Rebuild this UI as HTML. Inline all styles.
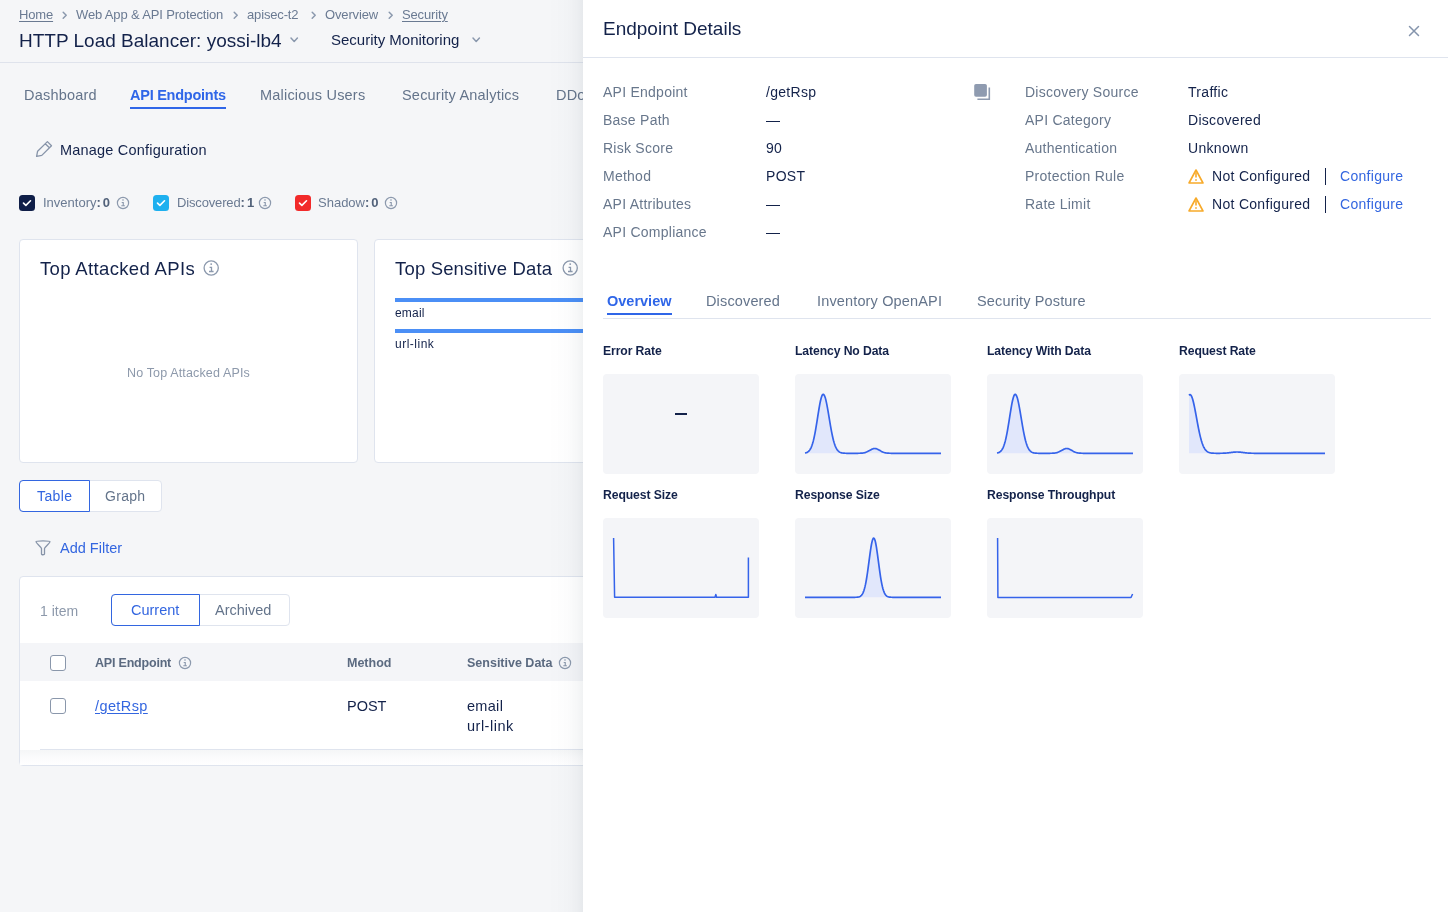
<!DOCTYPE html>
<html><head><meta charset="utf-8">
<style>
*{box-sizing:border-box;margin:0;padding:0}
html,body{width:1448px;height:912px;overflow:hidden}
body{font-family:"Liberation Sans",sans-serif;background:#f5f6f8;color:#13224a;position:relative}
.abs{position:absolute;white-space:nowrap;line-height:1;will-change:transform}
svg{position:absolute;overflow:visible}
.hdr{position:absolute;left:0;top:0;width:1448px;height:63px;border-bottom:1px solid #dfe3ec}
.bc{font-size:13px;color:#6a7a92;top:8px;letter-spacing:-.15px}
.bc u{text-decoration:underline;text-underline-offset:2px;text-decoration-thickness:1px}
.title{font-size:19px;color:#13224a;top:31px}
.tab{font-size:14.5px;color:#64748b;top:88px;letter-spacing:.2px}
.tab.act{color:#2f66e8;font-weight:bold;letter-spacing:-.25px}
.card{position:absolute;background:#fff;border:1px solid #dfe4ee;border-radius:4px}
.ph{font-size:18.5px;color:#13224a;top:260px}
.cb{position:absolute;width:16px;height:16px;border-radius:3.5px}
.lbl{font-size:13px;color:#6a7a92;top:196px}
.lbl b{color:#52627a}
.seg{position:absolute;background:#fff;border:1px solid #dfe4ee;border-radius:4px}
.segact{position:absolute;border:1px solid #3366e0;border-radius:4px 0 0 4px}
.panel{position:absolute;left:583px;top:0;width:865px;height:912px;background:#fff}
.shadow{position:absolute;left:548px;top:0;width:35px;height:912px;background:linear-gradient(to right,rgba(0,30,50,0) 0%,rgba(0,30,50,.012) 55%,rgba(0,30,50,.03) 80%,rgba(0,30,50,.055) 100%)}
.k{font-size:14px;color:#68778c;letter-spacing:.25px}
.v{font-size:14px;color:#13224a;letter-spacing:.3px}
.ct{font-size:12.2px;font-weight:bold;color:#13224a;letter-spacing:-.1px}
.cbx{position:absolute;width:156px;height:100px;background:#f4f5f8;border-radius:4px}
</style></head>
<body>
<div class="hdr"></div>
<!-- breadcrumb -->
<div class="abs bc" style="left:19px"><u>Home</u></div>
<svg style="left:62px;top:10.5px" width="6" height="9"><path d="M1.2 1.2 L4.2 4.2 L1.2 7.2" fill="none" stroke="#8a98ad" stroke-width="1.5" stroke-linecap="round" stroke-linejoin="round"/></svg>
<div class="abs bc" style="left:76px">Web App &amp; API Protection</div>
<svg style="left:233px;top:10.5px" width="6" height="9"><path d="M1.2 1.2 L4.2 4.2 L1.2 7.2" fill="none" stroke="#8a98ad" stroke-width="1.5" stroke-linecap="round" stroke-linejoin="round"/></svg>
<div class="abs bc" style="left:247px">apisec-t2</div>
<svg style="left:311px;top:10.5px" width="6" height="9"><path d="M1.2 1.2 L4.2 4.2 L1.2 7.2" fill="none" stroke="#8a98ad" stroke-width="1.5" stroke-linecap="round" stroke-linejoin="round"/></svg>
<div class="abs bc" style="left:325px">Overview</div>
<svg style="left:388px;top:10.5px" width="6" height="9"><path d="M1.2 1.2 L4.2 4.2 L1.2 7.2" fill="none" stroke="#8a98ad" stroke-width="1.5" stroke-linecap="round" stroke-linejoin="round"/></svg>
<div class="abs bc" style="left:402px"><u>Security</u></div>

<div class="abs title" style="left:19px">HTTP Load Balancer: yossi-lb4</div>
<svg style="left:290px;top:37px" width="9" height="7"><path d="M1 1 L4.2 4.4 L7.4 1" fill="none" stroke="#8a98ad" stroke-width="1.5" stroke-linecap="round" stroke-linejoin="round"/></svg>
<div class="abs" style="left:331px;top:32px;font-size:15px;color:#13224a">Security Monitoring</div>
<svg style="left:472px;top:37px" width="9" height="7"><path d="M1 1 L4.2 4.4 L7.4 1" fill="none" stroke="#8a98ad" stroke-width="1.5" stroke-linecap="round" stroke-linejoin="round"/></svg>

<!-- tabs -->
<div class="abs tab" style="left:24px">Dashboard</div>
<div class="abs tab act" style="left:130px">API Endpoints</div>
<div style="position:absolute;left:130px;top:107px;width:96px;height:2px;background:#2f66e8"></div>
<div class="abs tab" style="left:260px">Malicious Users</div>
<div class="abs tab" style="left:402px">Security Analytics</div>
<div class="abs tab" style="left:556px">DDoS</div>

<svg style="left:36px;top:141px" width="16" height="16"><path d="M0.6 15.4 L1.6 10.2 L11.4 0.6 L15.5 4.7 L5.8 14.4 Z M9.3 2.7 L13.4 6.8" fill="none" stroke="#8794a9" stroke-width="1.3" stroke-linejoin="round"/></svg>
<div class="abs" style="left:60px;top:143px;font-size:14.5px;color:#13224a;letter-spacing:.2px">Manage Configuration</div>

<div class="cb" style="left:19px;top:195px;background:#0f1e48"></div>
<svg style="left:19px;top:195px" width="16" height="16"><path d="M4.5 8.1 L6.9 10.4 L11.5 5.8" fill="none" stroke="#fff" stroke-width="1.6" stroke-linecap="round" stroke-linejoin="round"/></svg>
<div class="abs lbl" style="left:43px">Inventory<b>:<span style="margin-left:2px">0</span></b></div>
<svg style="left:116px;top:196px" width="14" height="14"><circle cx="7" cy="7" r="5.6" fill="none" stroke="#8c99ad" stroke-width="1.2"/><circle cx="7" cy="4.0" r="0.8" fill="#8c99ad"/><path d="M5.7 6.45 H7.25 V9.7 M5.3 9.75 H8.9" fill="none" stroke="#8c99ad" stroke-width="1.15"/></svg>

<div class="cb" style="left:153px;top:195px;background:#1eb0ef"></div>
<svg style="left:153px;top:195px" width="16" height="16"><path d="M4.5 8.1 L6.9 10.4 L11.5 5.8" fill="none" stroke="#fff" stroke-width="1.6" stroke-linecap="round" stroke-linejoin="round"/></svg>
<div class="abs lbl" style="left:177px"><span style="letter-spacing:-.15px">Discovered</span><b>:<span style="margin-left:2px">1</span></b></div>
<svg style="left:258px;top:196px" width="14" height="14"><circle cx="7" cy="7" r="5.6" fill="none" stroke="#8c99ad" stroke-width="1.2"/><circle cx="7" cy="4.0" r="0.8" fill="#8c99ad"/><path d="M5.7 6.45 H7.25 V9.7 M5.3 9.75 H8.9" fill="none" stroke="#8c99ad" stroke-width="1.15"/></svg>

<div class="cb" style="left:295px;top:195px;background:#f22a2a"></div>
<svg style="left:295px;top:195px" width="16" height="16"><path d="M4.5 8.1 L6.9 10.4 L11.5 5.8" fill="none" stroke="#fff" stroke-width="1.6" stroke-linecap="round" stroke-linejoin="round"/></svg>
<div class="abs lbl" style="left:318px">Shadow<b>:<span style="margin-left:2px">0</span></b></div>
<svg style="left:384px;top:196px" width="14" height="14"><circle cx="7" cy="7" r="5.6" fill="none" stroke="#8c99ad" stroke-width="1.2"/><circle cx="7" cy="4.0" r="0.8" fill="#8c99ad"/><path d="M5.7 6.45 H7.25 V9.7 M5.3 9.75 H8.9" fill="none" stroke="#8c99ad" stroke-width="1.15"/></svg>

<!-- cards -->
<div class="card" style="left:19px;top:239px;width:339px;height:224px"></div>
<div class="abs ph" style="left:40px;letter-spacing:.35px">Top Attacked APIs</div>
<svg style="left:203.3px;top:260px" width="16" height="16"><circle cx="8.2" cy="8" r="7.1" fill="none" stroke="#8c99ad" stroke-width="1.3"/><circle cx="8.2" cy="4.1" r="0.95" fill="#8c99ad"/><path d="M6.6 7.3 H8.5 V11.4 M6.0 11.5 H10.6" fill="none" stroke="#8c99ad" stroke-width="1.3"/></svg>
<div class="abs" style="left:127px;top:367px;font-size:12.5px;color:#8d99ab;letter-spacing:.15px">No Top Attacked APIs</div>

<div class="card" style="left:374px;top:239px;width:400px;height:224px"></div>
<div class="abs ph" style="left:395px;letter-spacing:.17px">Top Sensitive Data</div>
<svg style="left:562px;top:260px" width="16" height="16"><circle cx="8.2" cy="8" r="7.1" fill="none" stroke="#8c99ad" stroke-width="1.3"/><circle cx="8.2" cy="4.1" r="0.95" fill="#8c99ad"/><path d="M6.6 7.3 H8.5 V11.4 M6.0 11.5 H10.6" fill="none" stroke="#8c99ad" stroke-width="1.3"/></svg>
<div style="position:absolute;left:395px;top:298px;width:200px;height:4px;background:#4b8ff6"></div>
<div class="abs" style="left:395px;top:307px;font-size:12px;color:#13224a;letter-spacing:.2px">email</div>
<div style="position:absolute;left:395px;top:329px;width:200px;height:4px;background:#4b8ff6"></div>
<div class="abs" style="left:395px;top:338px;font-size:12px;color:#13224a;letter-spacing:.5px">url-link</div>

<!-- segmented -->
<div class="seg" style="left:19px;top:480px;width:143px;height:32px"></div>
<div class="segact" style="left:19px;top:480px;width:71px;height:32px"></div>
<div class="abs" style="left:37px;top:489px;font-size:14px;color:#3366e0;letter-spacing:.4px">Table</div>
<div class="abs" style="left:105px;top:489px;font-size:14px;color:#64748b;letter-spacing:.3px">Graph</div>

<svg style="left:35px;top:540px" width="16" height="16"><path d="M1 1.8 C1 0.6 15 0.6 15 1.8 C15 3 10.5 6.5 9.5 8.5 V14 C9.5 15 6.5 15 6.5 14 V8.5 C5.5 6.5 1 3 1 1.8 Z" fill="none" stroke="#8794a9" stroke-width="1.3" stroke-linejoin="round"/></svg>
<div class="abs" style="left:60px;top:541px;font-size:14.5px;color:#3366e0">Add Filter</div>

<!-- table card -->
<div class="card" style="left:19px;top:576px;width:700px;height:190px;border-radius:4px"></div>
<div class="abs" style="left:40px;top:604px;font-size:14px;color:#8d99ab">1 item</div>
<div class="seg" style="left:111px;top:594px;width:179px;height:32px"></div>
<div class="segact" style="left:111px;top:594px;width:89px;height:32px"></div>
<div class="abs" style="left:131px;top:603px;font-size:14.5px;color:#3366e0">Current</div>
<div class="abs" style="left:215px;top:603px;font-size:14.5px;color:#64748b">Archived</div>

<div style="position:absolute;left:20px;top:643px;width:700px;height:38px;background:#f4f5f8"></div>
<div style="position:absolute;left:50px;top:655px;width:16px;height:16px;border:1.3px solid #8a97ab;border-radius:3px;background:#fff"></div>
<div class="abs" style="left:95px;top:657px;font-size:12.5px;font-weight:bold;color:#5b6a80;letter-spacing:-.2px">API Endpoint</div>
<svg style="left:178px;top:656px" width="14" height="14"><circle cx="7" cy="7" r="5.6" fill="none" stroke="#8c99ad" stroke-width="1.2"/><circle cx="7" cy="4.0" r="0.8" fill="#8c99ad"/><path d="M5.7 6.45 H7.25 V9.7 M5.3 9.75 H8.9" fill="none" stroke="#8c99ad" stroke-width="1.15"/></svg>
<div class="abs" style="left:347px;top:657px;font-size:12.5px;font-weight:bold;color:#5b6a80">Method</div>
<div class="abs" style="left:467px;top:657px;font-size:12.5px;font-weight:bold;color:#5b6a80">Sensitive Data</div>
<svg style="left:558px;top:656px" width="14" height="14"><circle cx="7" cy="7" r="5.6" fill="none" stroke="#8c99ad" stroke-width="1.2"/><circle cx="7" cy="4.0" r="0.8" fill="#8c99ad"/><path d="M5.7 6.45 H7.25 V9.7 M5.3 9.75 H8.9" fill="none" stroke="#8c99ad" stroke-width="1.15"/></svg>

<div style="position:absolute;left:50px;top:698px;width:16px;height:16px;border:1.3px solid #8a97ab;border-radius:3px;background:#fff"></div>
<div class="abs" style="left:95px;top:699px;font-size:14.5px;color:#3366e0;text-decoration:underline;text-underline-offset:2px;letter-spacing:.4px">/getRsp</div>
<div class="abs" style="left:347px;top:699px;font-size:14.5px;color:#13224a">POST</div>
<div class="abs" style="left:467px;top:699px;font-size:14.5px;color:#13224a;letter-spacing:.3px">email</div>
<div class="abs" style="left:467px;top:719px;font-size:14.5px;color:#13224a;letter-spacing:.5px">url-link</div>
<div style="position:absolute;left:40px;top:749px;width:680px;height:1px;background:#dfe4ee"></div>
<div style="position:absolute;left:20px;top:750px;width:700px;height:15px;background:linear-gradient(#f5f6f7,#fcfcfd 60%,#fff)"></div>

<!-- panel -->
<div class="shadow"></div>
<div class="panel"></div>
<div class="abs" style="left:603px;top:19px;font-size:19px;color:#13224a">Endpoint Details</div>
<svg style="left:1409px;top:26px" width="10" height="10"><path d="M0.5 0.5 L9.5 9.5 M9.5 0.5 L0.5 9.5" stroke="#8494ac" stroke-width="1.5" stroke-linecap="round"/></svg>
<div style="position:absolute;left:583px;top:57px;width:865px;height:1px;background:#dfe4ee"></div>
<div class="abs k" style="left:603px;top:85px">API Endpoint</div>
<div class="abs v" style="left:766px;top:85px">/getRsp</div>
<div class="abs k" style="left:603px;top:113px">Base Path</div>
<div class="abs v" style="left:766px;top:113px">—</div>
<div class="abs k" style="left:603px;top:141px">Risk Score</div>
<div class="abs v" style="left:766px;top:141px">90</div>
<div class="abs k" style="left:603px;top:169px">Method</div>
<div class="abs v" style="left:766px;top:169px">POST</div>
<div class="abs k" style="left:603px;top:197px">API Attributes</div>
<div class="abs v" style="left:766px;top:197px">—</div>
<div class="abs k" style="left:603px;top:225px">API Compliance</div>
<div class="abs v" style="left:766px;top:225px">—</div>
<svg style="left:974px;top:84px" width="17" height="17"><rect x="0.2" y="0" width="12.7" height="12.7" rx="1.8" fill="#8f9bb0"/><path d="M15.3 3.5 V15.2 H3.4" fill="none" stroke="#8f9bb0" stroke-width="1.6"/></svg>
<div class="abs k" style="left:1025px;top:85px">Discovery Source</div>
<div class="abs v" style="left:1188px;top:85px">Traffic</div>
<div class="abs k" style="left:1025px;top:113px">API Category</div>
<div class="abs v" style="left:1188px;top:113px">Discovered</div>
<div class="abs k" style="left:1025px;top:141px">Authentication</div>
<div class="abs v" style="left:1188px;top:141px">Unknown</div>
<div class="abs k" style="left:1025px;top:169px">Protection Rule</div>
<svg style="left:1188px;top:169px" width="16" height="15"><path d="M8 1 L15 14 H1 Z" fill="none" stroke="#f7aa2a" stroke-width="1.6" stroke-linejoin="round"/><path d="M8 3.2 V8.6" stroke="#f7aa2a" stroke-width="1.6"/><rect x="7.2" y="10.2" width="1.6" height="1.6" fill="#f7aa2a"/></svg>
<div class="abs v" style="left:1212px;top:169px">Not Configured</div>
<div style="position:absolute;left:1325px;top:168px;width:1.3px;height:17px;background:#13224a"></div>
<div class="abs v" style="left:1340px;top:169px;color:#3366e0">Configure</div>
<div class="abs k" style="left:1025px;top:197px">Rate Limit</div>
<svg style="left:1188px;top:197px" width="16" height="15"><path d="M8 1 L15 14 H1 Z" fill="none" stroke="#f7aa2a" stroke-width="1.6" stroke-linejoin="round"/><path d="M8 3.2 V8.6" stroke="#f7aa2a" stroke-width="1.6"/><rect x="7.2" y="10.2" width="1.6" height="1.6" fill="#f7aa2a"/></svg>
<div class="abs v" style="left:1212px;top:197px">Not Configured</div>
<div style="position:absolute;left:1325px;top:196px;width:1.3px;height:17px;background:#13224a"></div>
<div class="abs v" style="left:1340px;top:197px;color:#3366e0">Configure</div>
<div class="abs" style="left:607px;top:294px;font-size:14.5px;letter-spacing:.15px;color:#2f66e8;font-weight:bold;letter-spacing:0">Overview</div>
<div class="abs" style="left:706px;top:294px;font-size:14.5px;letter-spacing:.15px;color:#64748b">Discovered</div>
<div class="abs" style="left:817px;top:294px;font-size:14.5px;letter-spacing:.15px;color:#64748b">Inventory OpenAPI</div>
<div class="abs" style="left:977px;top:294px;font-size:14.5px;letter-spacing:.15px;color:#64748b">Security Posture</div>
<div style="position:absolute;left:603px;top:318px;width:828px;height:1px;background:#dfe4ee"></div>
<div style="position:absolute;left:607px;top:313px;width:65px;height:2px;background:#2f66e8"></div>
<div class="abs ct" style="left:603px;top:345px">Error Rate</div>
<div class="cbx" style="left:603px;top:374px"></div><div style="position:absolute;left:675px;top:412.5px;width:12px;height:2px;background:#13224a"></div>
<div class="abs ct" style="left:795px;top:345px">Latency No Data</div>
<div class="cbx" style="left:795px;top:374px"></div><svg style="left:795px;top:374px" width="156" height="100"><path d="M10.0 79.00 L10.5 78.90 L11.0 78.77 L11.5 78.61 L12.0 78.40 L12.5 78.14 L13.0 77.82 L13.5 77.42 L14.0 76.93 L14.5 76.34 L15.0 75.63 L15.5 74.79 L16.0 73.80 L16.5 72.65 L17.0 71.32 L17.5 69.79 L18.0 68.07 L18.5 66.14 L19.0 64.00 L19.5 61.65 L20.0 59.10 L20.5 56.38 L21.0 53.48 L21.5 50.46 L22.0 47.33 L22.5 44.15 L23.0 40.96 L23.5 37.81 L24.0 34.76 L24.5 31.87 L25.0 29.19 L25.5 26.77 L26.0 24.68 L26.5 22.96 L27.0 21.64 L27.5 20.76 L28.0 20.34 L28.5 20.38 L29.0 20.84 L29.5 21.71 L30.0 22.98 L30.5 24.62 L31.0 26.58 L31.5 28.84 L32.0 31.35 L32.5 34.06 L33.0 36.92 L33.5 39.89 L34.0 42.91 L34.5 45.94 L35.0 48.93 L35.5 51.86 L36.0 54.68 L36.5 57.37 L37.0 59.90 L37.5 62.27 L38.0 64.45 L38.5 66.45 L39.0 68.25 L39.5 69.87 L40.0 71.32 L40.5 72.58 L41.0 73.69 L41.5 74.65 L42.0 75.47 L42.5 76.17 L43.0 76.76 L43.5 77.26 L44.0 77.66 L44.5 78.00 L45.0 78.28 L45.5 78.50 L46.0 78.68 L46.5 78.82 L47.0 78.93 L47.5 79.02 L48.0 79.09 L48.5 79.14 L49.0 79.18 L49.5 79.21 L50.0 79.24 L50.5 79.25 L51.0 79.27 L51.5 79.28 L52.0 79.28 L52.5 79.29 L53.0 79.29 L53.5 79.29 L54.0 79.30 L54.5 79.30 L55.0 79.30 L55.5 79.30 L56.0 79.30 L56.5 79.30 L57.0 79.30 L57.5 79.30 L58.0 79.30 L58.5 79.30 L59.0 79.30 L59.5 79.30 L60.0 79.30 L60.5 79.30 L61.0 79.30 L61.5 79.29 L62.0 79.29 L62.5 79.29 L63.0 79.28 L63.5 79.27 L64.0 79.27 L64.5 79.25 L65.0 79.24 L65.5 79.21 L66.0 79.19 L66.5 79.15 L67.0 79.11 L67.5 79.06 L68.0 78.99 L68.5 78.91 L69.0 78.81 L69.5 78.70 L70.0 78.57 L70.5 78.42 L71.0 78.24 L71.5 78.05 L72.0 77.83 L72.5 77.60 L73.0 77.34 L73.5 77.07 L74.0 76.79 L74.5 76.51 L75.0 76.21 L75.5 75.93 L76.0 75.65 L76.5 75.39 L77.0 75.15 L77.5 74.94 L78.0 74.77 L78.5 74.64 L79.0 74.55 L79.5 74.50 L80.0 74.51 L80.5 74.56 L81.0 74.66 L81.5 74.80 L82.0 74.98 L82.5 75.20 L83.0 75.44 L83.5 75.70 L84.0 75.98 L84.5 76.27 L85.0 76.56 L85.5 76.85 L86.0 77.13 L86.5 77.40 L87.0 77.65 L87.5 77.88 L88.0 78.09 L88.5 78.28 L89.0 78.45 L89.5 78.60 L90.0 78.72 L90.5 78.83 L91.0 78.93 L91.5 79.00 L92.0 79.07 L92.5 79.12 L93.0 79.16 L93.5 79.19 L94.0 79.22 L94.5 79.24 L95.0 79.26 L95.5 79.27 L96.0 79.28 L96.5 79.28 L97.0 79.29 L97.5 79.29 L98.0 79.29 L98.5 79.30 L99.0 79.30 L99.5 79.30 L100.0 79.30 L100.5 79.30 L101.0 79.30 L101.5 79.30 L102.0 79.30 L102.5 79.30 L103.0 79.30 L103.5 79.30 L104.0 79.30 L104.5 79.30 L105.0 79.30 L105.5 79.30 L106.0 79.30 L106.5 79.30 L107.0 79.30 L107.5 79.30 L108.0 79.30 L108.5 79.30 L109.0 79.30 L109.5 79.30 L110.0 79.30 L110.5 79.30 L111.0 79.30 L111.5 79.30 L112.0 79.30 L112.5 79.30 L113.0 79.30 L113.5 79.30 L114.0 79.30 L114.5 79.30 L115.0 79.30 L115.5 79.30 L116.0 79.30 L116.5 79.30 L117.0 79.30 L117.5 79.30 L118.0 79.30 L118.5 79.30 L119.0 79.30 L119.5 79.30 L120.0 79.30 L120.5 79.30 L121.0 79.30 L121.5 79.30 L122.0 79.30 L122.5 79.30 L123.0 79.30 L123.5 79.30 L124.0 79.30 L124.5 79.30 L125.0 79.30 L125.5 79.30 L126.0 79.30 L126.5 79.30 L127.0 79.30 L127.5 79.30 L128.0 79.30 L128.5 79.30 L129.0 79.30 L129.5 79.30 L130.0 79.30 L130.5 79.30 L131.0 79.30 L131.5 79.30 L132.0 79.30 L132.5 79.30 L133.0 79.30 L133.5 79.30 L134.0 79.30 L134.5 79.30 L135.0 79.30 L135.5 79.30 L136.0 79.30 L136.5 79.30 L137.0 79.30 L137.5 79.30 L138.0 79.30 L138.5 79.30 L139.0 79.30 L139.5 79.30 L140.0 79.30 L140.5 79.30 L141.0 79.30 L141.5 79.30 L142.0 79.30 L142.5 79.30 L143.0 79.30 L143.5 79.30 L144.0 79.30 L144.5 79.30 L145.0 79.30 L145.5 79.30 L146.0 79.30 L146.0 79.3 L10.0 79.3 Z" fill="#e1e7fb"/><path d="M10.0 79.00 L10.5 78.90 L11.0 78.77 L11.5 78.61 L12.0 78.40 L12.5 78.14 L13.0 77.82 L13.5 77.42 L14.0 76.93 L14.5 76.34 L15.0 75.63 L15.5 74.79 L16.0 73.80 L16.5 72.65 L17.0 71.32 L17.5 69.79 L18.0 68.07 L18.5 66.14 L19.0 64.00 L19.5 61.65 L20.0 59.10 L20.5 56.38 L21.0 53.48 L21.5 50.46 L22.0 47.33 L22.5 44.15 L23.0 40.96 L23.5 37.81 L24.0 34.76 L24.5 31.87 L25.0 29.19 L25.5 26.77 L26.0 24.68 L26.5 22.96 L27.0 21.64 L27.5 20.76 L28.0 20.34 L28.5 20.38 L29.0 20.84 L29.5 21.71 L30.0 22.98 L30.5 24.62 L31.0 26.58 L31.5 28.84 L32.0 31.35 L32.5 34.06 L33.0 36.92 L33.5 39.89 L34.0 42.91 L34.5 45.94 L35.0 48.93 L35.5 51.86 L36.0 54.68 L36.5 57.37 L37.0 59.90 L37.5 62.27 L38.0 64.45 L38.5 66.45 L39.0 68.25 L39.5 69.87 L40.0 71.32 L40.5 72.58 L41.0 73.69 L41.5 74.65 L42.0 75.47 L42.5 76.17 L43.0 76.76 L43.5 77.26 L44.0 77.66 L44.5 78.00 L45.0 78.28 L45.5 78.50 L46.0 78.68 L46.5 78.82 L47.0 78.93 L47.5 79.02 L48.0 79.09 L48.5 79.14 L49.0 79.18 L49.5 79.21 L50.0 79.24 L50.5 79.25 L51.0 79.27 L51.5 79.28 L52.0 79.28 L52.5 79.29 L53.0 79.29 L53.5 79.29 L54.0 79.30 L54.5 79.30 L55.0 79.30 L55.5 79.30 L56.0 79.30 L56.5 79.30 L57.0 79.30 L57.5 79.30 L58.0 79.30 L58.5 79.30 L59.0 79.30 L59.5 79.30 L60.0 79.30 L60.5 79.30 L61.0 79.30 L61.5 79.29 L62.0 79.29 L62.5 79.29 L63.0 79.28 L63.5 79.27 L64.0 79.27 L64.5 79.25 L65.0 79.24 L65.5 79.21 L66.0 79.19 L66.5 79.15 L67.0 79.11 L67.5 79.06 L68.0 78.99 L68.5 78.91 L69.0 78.81 L69.5 78.70 L70.0 78.57 L70.5 78.42 L71.0 78.24 L71.5 78.05 L72.0 77.83 L72.5 77.60 L73.0 77.34 L73.5 77.07 L74.0 76.79 L74.5 76.51 L75.0 76.21 L75.5 75.93 L76.0 75.65 L76.5 75.39 L77.0 75.15 L77.5 74.94 L78.0 74.77 L78.5 74.64 L79.0 74.55 L79.5 74.50 L80.0 74.51 L80.5 74.56 L81.0 74.66 L81.5 74.80 L82.0 74.98 L82.5 75.20 L83.0 75.44 L83.5 75.70 L84.0 75.98 L84.5 76.27 L85.0 76.56 L85.5 76.85 L86.0 77.13 L86.5 77.40 L87.0 77.65 L87.5 77.88 L88.0 78.09 L88.5 78.28 L89.0 78.45 L89.5 78.60 L90.0 78.72 L90.5 78.83 L91.0 78.93 L91.5 79.00 L92.0 79.07 L92.5 79.12 L93.0 79.16 L93.5 79.19 L94.0 79.22 L94.5 79.24 L95.0 79.26 L95.5 79.27 L96.0 79.28 L96.5 79.28 L97.0 79.29 L97.5 79.29 L98.0 79.29 L98.5 79.30 L99.0 79.30 L99.5 79.30 L100.0 79.30 L100.5 79.30 L101.0 79.30 L101.5 79.30 L102.0 79.30 L102.5 79.30 L103.0 79.30 L103.5 79.30 L104.0 79.30 L104.5 79.30 L105.0 79.30 L105.5 79.30 L106.0 79.30 L106.5 79.30 L107.0 79.30 L107.5 79.30 L108.0 79.30 L108.5 79.30 L109.0 79.30 L109.5 79.30 L110.0 79.30 L110.5 79.30 L111.0 79.30 L111.5 79.30 L112.0 79.30 L112.5 79.30 L113.0 79.30 L113.5 79.30 L114.0 79.30 L114.5 79.30 L115.0 79.30 L115.5 79.30 L116.0 79.30 L116.5 79.30 L117.0 79.30 L117.5 79.30 L118.0 79.30 L118.5 79.30 L119.0 79.30 L119.5 79.30 L120.0 79.30 L120.5 79.30 L121.0 79.30 L121.5 79.30 L122.0 79.30 L122.5 79.30 L123.0 79.30 L123.5 79.30 L124.0 79.30 L124.5 79.30 L125.0 79.30 L125.5 79.30 L126.0 79.30 L126.5 79.30 L127.0 79.30 L127.5 79.30 L128.0 79.30 L128.5 79.30 L129.0 79.30 L129.5 79.30 L130.0 79.30 L130.5 79.30 L131.0 79.30 L131.5 79.30 L132.0 79.30 L132.5 79.30 L133.0 79.30 L133.5 79.30 L134.0 79.30 L134.5 79.30 L135.0 79.30 L135.5 79.30 L136.0 79.30 L136.5 79.30 L137.0 79.30 L137.5 79.30 L138.0 79.30 L138.5 79.30 L139.0 79.30 L139.5 79.30 L140.0 79.30 L140.5 79.30 L141.0 79.30 L141.5 79.30 L142.0 79.30 L142.5 79.30 L143.0 79.30 L143.5 79.30 L144.0 79.30 L144.5 79.30 L145.0 79.30 L145.5 79.30 L146.0 79.30" fill="none" stroke="#3563ea" stroke-width="1.7" stroke-linejoin="round"/></svg>
<div class="abs ct" style="left:987px;top:345px">Latency With Data</div>
<div class="cbx" style="left:987px;top:374px"></div><svg style="left:987px;top:374px" width="156" height="100"><path d="M10.0 79.00 L10.5 78.90 L11.0 78.77 L11.5 78.61 L12.0 78.40 L12.5 78.14 L13.0 77.82 L13.5 77.42 L14.0 76.93 L14.5 76.34 L15.0 75.63 L15.5 74.79 L16.0 73.80 L16.5 72.65 L17.0 71.32 L17.5 69.79 L18.0 68.07 L18.5 66.14 L19.0 64.00 L19.5 61.65 L20.0 59.10 L20.5 56.38 L21.0 53.48 L21.5 50.46 L22.0 47.33 L22.5 44.15 L23.0 40.96 L23.5 37.81 L24.0 34.76 L24.5 31.87 L25.0 29.19 L25.5 26.77 L26.0 24.68 L26.5 22.96 L27.0 21.64 L27.5 20.76 L28.0 20.34 L28.5 20.38 L29.0 20.84 L29.5 21.71 L30.0 22.98 L30.5 24.62 L31.0 26.58 L31.5 28.84 L32.0 31.35 L32.5 34.06 L33.0 36.92 L33.5 39.89 L34.0 42.91 L34.5 45.94 L35.0 48.93 L35.5 51.86 L36.0 54.68 L36.5 57.37 L37.0 59.90 L37.5 62.27 L38.0 64.45 L38.5 66.45 L39.0 68.25 L39.5 69.87 L40.0 71.32 L40.5 72.58 L41.0 73.69 L41.5 74.65 L42.0 75.47 L42.5 76.17 L43.0 76.76 L43.5 77.26 L44.0 77.66 L44.5 78.00 L45.0 78.28 L45.5 78.50 L46.0 78.68 L46.5 78.82 L47.0 78.93 L47.5 79.02 L48.0 79.09 L48.5 79.14 L49.0 79.18 L49.5 79.21 L50.0 79.24 L50.5 79.25 L51.0 79.27 L51.5 79.28 L52.0 79.28 L52.5 79.29 L53.0 79.29 L53.5 79.29 L54.0 79.30 L54.5 79.30 L55.0 79.30 L55.5 79.30 L56.0 79.30 L56.5 79.30 L57.0 79.30 L57.5 79.30 L58.0 79.30 L58.5 79.30 L59.0 79.30 L59.5 79.30 L60.0 79.30 L60.5 79.30 L61.0 79.30 L61.5 79.29 L62.0 79.29 L62.5 79.29 L63.0 79.28 L63.5 79.27 L64.0 79.27 L64.5 79.25 L65.0 79.24 L65.5 79.21 L66.0 79.19 L66.5 79.15 L67.0 79.11 L67.5 79.06 L68.0 78.99 L68.5 78.91 L69.0 78.81 L69.5 78.70 L70.0 78.57 L70.5 78.42 L71.0 78.24 L71.5 78.05 L72.0 77.83 L72.5 77.60 L73.0 77.34 L73.5 77.07 L74.0 76.79 L74.5 76.51 L75.0 76.21 L75.5 75.93 L76.0 75.65 L76.5 75.39 L77.0 75.15 L77.5 74.94 L78.0 74.77 L78.5 74.64 L79.0 74.55 L79.5 74.50 L80.0 74.51 L80.5 74.56 L81.0 74.66 L81.5 74.80 L82.0 74.98 L82.5 75.20 L83.0 75.44 L83.5 75.70 L84.0 75.98 L84.5 76.27 L85.0 76.56 L85.5 76.85 L86.0 77.13 L86.5 77.40 L87.0 77.65 L87.5 77.88 L88.0 78.09 L88.5 78.28 L89.0 78.45 L89.5 78.60 L90.0 78.72 L90.5 78.83 L91.0 78.93 L91.5 79.00 L92.0 79.07 L92.5 79.12 L93.0 79.16 L93.5 79.19 L94.0 79.22 L94.5 79.24 L95.0 79.26 L95.5 79.27 L96.0 79.28 L96.5 79.28 L97.0 79.29 L97.5 79.29 L98.0 79.29 L98.5 79.30 L99.0 79.30 L99.5 79.30 L100.0 79.30 L100.5 79.30 L101.0 79.30 L101.5 79.30 L102.0 79.30 L102.5 79.30 L103.0 79.30 L103.5 79.30 L104.0 79.30 L104.5 79.30 L105.0 79.30 L105.5 79.30 L106.0 79.30 L106.5 79.30 L107.0 79.30 L107.5 79.30 L108.0 79.30 L108.5 79.30 L109.0 79.30 L109.5 79.30 L110.0 79.30 L110.5 79.30 L111.0 79.30 L111.5 79.30 L112.0 79.30 L112.5 79.30 L113.0 79.30 L113.5 79.30 L114.0 79.30 L114.5 79.30 L115.0 79.30 L115.5 79.30 L116.0 79.30 L116.5 79.30 L117.0 79.30 L117.5 79.30 L118.0 79.30 L118.5 79.30 L119.0 79.30 L119.5 79.30 L120.0 79.30 L120.5 79.30 L121.0 79.30 L121.5 79.30 L122.0 79.30 L122.5 79.30 L123.0 79.30 L123.5 79.30 L124.0 79.30 L124.5 79.30 L125.0 79.30 L125.5 79.30 L126.0 79.30 L126.5 79.30 L127.0 79.30 L127.5 79.30 L128.0 79.30 L128.5 79.30 L129.0 79.30 L129.5 79.30 L130.0 79.30 L130.5 79.30 L131.0 79.30 L131.5 79.30 L132.0 79.30 L132.5 79.30 L133.0 79.30 L133.5 79.30 L134.0 79.30 L134.5 79.30 L135.0 79.30 L135.5 79.30 L136.0 79.30 L136.5 79.30 L137.0 79.30 L137.5 79.30 L138.0 79.30 L138.5 79.30 L139.0 79.30 L139.5 79.30 L140.0 79.30 L140.5 79.30 L141.0 79.30 L141.5 79.30 L142.0 79.30 L142.5 79.30 L143.0 79.30 L143.5 79.30 L144.0 79.30 L144.5 79.30 L145.0 79.30 L145.5 79.30 L146.0 79.30 L146.0 79.3 L10.0 79.3 Z" fill="#e1e7fb"/><path d="M10.0 79.00 L10.5 78.90 L11.0 78.77 L11.5 78.61 L12.0 78.40 L12.5 78.14 L13.0 77.82 L13.5 77.42 L14.0 76.93 L14.5 76.34 L15.0 75.63 L15.5 74.79 L16.0 73.80 L16.5 72.65 L17.0 71.32 L17.5 69.79 L18.0 68.07 L18.5 66.14 L19.0 64.00 L19.5 61.65 L20.0 59.10 L20.5 56.38 L21.0 53.48 L21.5 50.46 L22.0 47.33 L22.5 44.15 L23.0 40.96 L23.5 37.81 L24.0 34.76 L24.5 31.87 L25.0 29.19 L25.5 26.77 L26.0 24.68 L26.5 22.96 L27.0 21.64 L27.5 20.76 L28.0 20.34 L28.5 20.38 L29.0 20.84 L29.5 21.71 L30.0 22.98 L30.5 24.62 L31.0 26.58 L31.5 28.84 L32.0 31.35 L32.5 34.06 L33.0 36.92 L33.5 39.89 L34.0 42.91 L34.5 45.94 L35.0 48.93 L35.5 51.86 L36.0 54.68 L36.5 57.37 L37.0 59.90 L37.5 62.27 L38.0 64.45 L38.5 66.45 L39.0 68.25 L39.5 69.87 L40.0 71.32 L40.5 72.58 L41.0 73.69 L41.5 74.65 L42.0 75.47 L42.5 76.17 L43.0 76.76 L43.5 77.26 L44.0 77.66 L44.5 78.00 L45.0 78.28 L45.5 78.50 L46.0 78.68 L46.5 78.82 L47.0 78.93 L47.5 79.02 L48.0 79.09 L48.5 79.14 L49.0 79.18 L49.5 79.21 L50.0 79.24 L50.5 79.25 L51.0 79.27 L51.5 79.28 L52.0 79.28 L52.5 79.29 L53.0 79.29 L53.5 79.29 L54.0 79.30 L54.5 79.30 L55.0 79.30 L55.5 79.30 L56.0 79.30 L56.5 79.30 L57.0 79.30 L57.5 79.30 L58.0 79.30 L58.5 79.30 L59.0 79.30 L59.5 79.30 L60.0 79.30 L60.5 79.30 L61.0 79.30 L61.5 79.29 L62.0 79.29 L62.5 79.29 L63.0 79.28 L63.5 79.27 L64.0 79.27 L64.5 79.25 L65.0 79.24 L65.5 79.21 L66.0 79.19 L66.5 79.15 L67.0 79.11 L67.5 79.06 L68.0 78.99 L68.5 78.91 L69.0 78.81 L69.5 78.70 L70.0 78.57 L70.5 78.42 L71.0 78.24 L71.5 78.05 L72.0 77.83 L72.5 77.60 L73.0 77.34 L73.5 77.07 L74.0 76.79 L74.5 76.51 L75.0 76.21 L75.5 75.93 L76.0 75.65 L76.5 75.39 L77.0 75.15 L77.5 74.94 L78.0 74.77 L78.5 74.64 L79.0 74.55 L79.5 74.50 L80.0 74.51 L80.5 74.56 L81.0 74.66 L81.5 74.80 L82.0 74.98 L82.5 75.20 L83.0 75.44 L83.5 75.70 L84.0 75.98 L84.5 76.27 L85.0 76.56 L85.5 76.85 L86.0 77.13 L86.5 77.40 L87.0 77.65 L87.5 77.88 L88.0 78.09 L88.5 78.28 L89.0 78.45 L89.5 78.60 L90.0 78.72 L90.5 78.83 L91.0 78.93 L91.5 79.00 L92.0 79.07 L92.5 79.12 L93.0 79.16 L93.5 79.19 L94.0 79.22 L94.5 79.24 L95.0 79.26 L95.5 79.27 L96.0 79.28 L96.5 79.28 L97.0 79.29 L97.5 79.29 L98.0 79.29 L98.5 79.30 L99.0 79.30 L99.5 79.30 L100.0 79.30 L100.5 79.30 L101.0 79.30 L101.5 79.30 L102.0 79.30 L102.5 79.30 L103.0 79.30 L103.5 79.30 L104.0 79.30 L104.5 79.30 L105.0 79.30 L105.5 79.30 L106.0 79.30 L106.5 79.30 L107.0 79.30 L107.5 79.30 L108.0 79.30 L108.5 79.30 L109.0 79.30 L109.5 79.30 L110.0 79.30 L110.5 79.30 L111.0 79.30 L111.5 79.30 L112.0 79.30 L112.5 79.30 L113.0 79.30 L113.5 79.30 L114.0 79.30 L114.5 79.30 L115.0 79.30 L115.5 79.30 L116.0 79.30 L116.5 79.30 L117.0 79.30 L117.5 79.30 L118.0 79.30 L118.5 79.30 L119.0 79.30 L119.5 79.30 L120.0 79.30 L120.5 79.30 L121.0 79.30 L121.5 79.30 L122.0 79.30 L122.5 79.30 L123.0 79.30 L123.5 79.30 L124.0 79.30 L124.5 79.30 L125.0 79.30 L125.5 79.30 L126.0 79.30 L126.5 79.30 L127.0 79.30 L127.5 79.30 L128.0 79.30 L128.5 79.30 L129.0 79.30 L129.5 79.30 L130.0 79.30 L130.5 79.30 L131.0 79.30 L131.5 79.30 L132.0 79.30 L132.5 79.30 L133.0 79.30 L133.5 79.30 L134.0 79.30 L134.5 79.30 L135.0 79.30 L135.5 79.30 L136.0 79.30 L136.5 79.30 L137.0 79.30 L137.5 79.30 L138.0 79.30 L138.5 79.30 L139.0 79.30 L139.5 79.30 L140.0 79.30 L140.5 79.30 L141.0 79.30 L141.5 79.30 L142.0 79.30 L142.5 79.30 L143.0 79.30 L143.5 79.30 L144.0 79.30 L144.5 79.30 L145.0 79.30 L145.5 79.30 L146.0 79.30" fill="none" stroke="#3563ea" stroke-width="1.7" stroke-linejoin="round"/></svg>
<div class="abs ct" style="left:1179px;top:345px">Request Rate</div>
<div class="cbx" style="left:1179px;top:374px"></div><svg style="left:1179px;top:374px" width="156" height="100"><path d="M10.0 21.29 L10.5 20.77 L11.0 20.60 L11.5 20.77 L12.0 21.29 L12.5 22.14 L13.0 23.31 L13.5 24.79 L14.0 26.53 L14.5 28.52 L15.0 30.73 L15.5 33.11 L16.0 35.63 L16.5 38.26 L17.0 40.96 L17.5 43.70 L18.0 46.43 L18.5 49.13 L19.0 51.78 L19.5 54.34 L20.0 56.79 L20.5 59.13 L21.0 61.32 L21.5 63.38 L22.0 65.28 L22.5 67.03 L23.0 68.62 L23.5 70.06 L24.0 71.36 L24.5 72.51 L25.0 73.53 L25.5 74.42 L26.0 75.21 L26.5 75.88 L27.0 76.46 L27.5 76.96 L28.0 77.38 L28.5 77.73 L29.0 78.03 L29.5 78.28 L30.0 78.48 L30.5 78.65 L31.0 78.78 L31.5 78.89 L32.0 78.98 L32.5 79.05 L33.0 79.11 L33.5 79.15 L34.0 79.19 L34.5 79.21 L35.0 79.23 L35.5 79.25 L36.0 79.26 L36.5 79.27 L37.0 79.28 L37.5 79.28 L38.0 79.28 L38.5 79.29 L39.0 79.29 L39.5 79.28 L40.0 79.28 L40.5 79.28 L41.0 79.28 L41.5 79.27 L42.0 79.26 L42.5 79.25 L43.0 79.24 L43.5 79.23 L44.0 79.21 L44.5 79.20 L45.0 79.18 L45.5 79.15 L46.0 79.12 L46.5 79.09 L47.0 79.06 L47.5 79.02 L48.0 78.98 L48.5 78.93 L49.0 78.88 L49.5 78.82 L50.0 78.77 L50.5 78.70 L51.0 78.64 L51.5 78.58 L52.0 78.51 L52.5 78.45 L53.0 78.38 L53.5 78.32 L54.0 78.26 L54.5 78.20 L55.0 78.15 L55.5 78.11 L56.0 78.07 L56.5 78.04 L57.0 78.02 L57.5 78.00 L58.0 78.00 L58.5 78.00 L59.0 78.02 L59.5 78.04 L60.0 78.07 L60.5 78.11 L61.0 78.15 L61.5 78.20 L62.0 78.26 L62.5 78.32 L63.0 78.38 L63.5 78.45 L64.0 78.51 L64.5 78.58 L65.0 78.64 L65.5 78.70 L66.0 78.77 L66.5 78.82 L67.0 78.88 L67.5 78.93 L68.0 78.98 L68.5 79.02 L69.0 79.06 L69.5 79.09 L70.0 79.12 L70.5 79.15 L71.0 79.18 L71.5 79.20 L72.0 79.21 L72.5 79.23 L73.0 79.24 L73.5 79.25 L74.0 79.26 L74.5 79.27 L75.0 79.28 L75.5 79.28 L76.0 79.29 L76.5 79.29 L77.0 79.29 L77.5 79.29 L78.0 79.29 L78.5 79.30 L79.0 79.30 L79.5 79.30 L80.0 79.30 L80.5 79.30 L81.0 79.30 L81.5 79.30 L82.0 79.30 L82.5 79.30 L83.0 79.30 L83.5 79.30 L84.0 79.30 L84.5 79.30 L85.0 79.30 L85.5 79.30 L86.0 79.30 L86.5 79.30 L87.0 79.30 L87.5 79.30 L88.0 79.30 L88.5 79.30 L89.0 79.30 L89.5 79.30 L90.0 79.30 L90.5 79.30 L91.0 79.30 L91.5 79.30 L92.0 79.30 L92.5 79.30 L93.0 79.30 L93.5 79.30 L94.0 79.30 L94.5 79.30 L95.0 79.30 L95.5 79.30 L96.0 79.30 L96.5 79.30 L97.0 79.30 L97.5 79.30 L98.0 79.30 L98.5 79.30 L99.0 79.30 L99.5 79.30 L100.0 79.30 L100.5 79.30 L101.0 79.30 L101.5 79.30 L102.0 79.30 L102.5 79.30 L103.0 79.30 L103.5 79.30 L104.0 79.30 L104.5 79.30 L105.0 79.30 L105.5 79.30 L106.0 79.30 L106.5 79.30 L107.0 79.30 L107.5 79.30 L108.0 79.30 L108.5 79.30 L109.0 79.30 L109.5 79.30 L110.0 79.30 L110.5 79.30 L111.0 79.30 L111.5 79.30 L112.0 79.30 L112.5 79.30 L113.0 79.30 L113.5 79.30 L114.0 79.30 L114.5 79.30 L115.0 79.30 L115.5 79.30 L116.0 79.30 L116.5 79.30 L117.0 79.30 L117.5 79.30 L118.0 79.30 L118.5 79.30 L119.0 79.30 L119.5 79.30 L120.0 79.30 L120.5 79.30 L121.0 79.30 L121.5 79.30 L122.0 79.30 L122.5 79.30 L123.0 79.30 L123.5 79.30 L124.0 79.30 L124.5 79.30 L125.0 79.30 L125.5 79.30 L126.0 79.30 L126.5 79.30 L127.0 79.30 L127.5 79.30 L128.0 79.30 L128.5 79.30 L129.0 79.30 L129.5 79.30 L130.0 79.30 L130.5 79.30 L131.0 79.30 L131.5 79.30 L132.0 79.30 L132.5 79.30 L133.0 79.30 L133.5 79.30 L134.0 79.30 L134.5 79.30 L135.0 79.30 L135.5 79.30 L136.0 79.30 L136.5 79.30 L137.0 79.30 L137.5 79.30 L138.0 79.30 L138.5 79.30 L139.0 79.30 L139.5 79.30 L140.0 79.30 L140.5 79.30 L141.0 79.30 L141.5 79.30 L142.0 79.30 L142.5 79.30 L143.0 79.30 L143.5 79.30 L144.0 79.30 L144.5 79.30 L145.0 79.30 L145.5 79.30 L146.0 79.30 L146.0 79.3 L10.0 79.3 Z" fill="#e1e7fb"/><path d="M10.0 21.29 L10.5 20.77 L11.0 20.60 L11.5 20.77 L12.0 21.29 L12.5 22.14 L13.0 23.31 L13.5 24.79 L14.0 26.53 L14.5 28.52 L15.0 30.73 L15.5 33.11 L16.0 35.63 L16.5 38.26 L17.0 40.96 L17.5 43.70 L18.0 46.43 L18.5 49.13 L19.0 51.78 L19.5 54.34 L20.0 56.79 L20.5 59.13 L21.0 61.32 L21.5 63.38 L22.0 65.28 L22.5 67.03 L23.0 68.62 L23.5 70.06 L24.0 71.36 L24.5 72.51 L25.0 73.53 L25.5 74.42 L26.0 75.21 L26.5 75.88 L27.0 76.46 L27.5 76.96 L28.0 77.38 L28.5 77.73 L29.0 78.03 L29.5 78.28 L30.0 78.48 L30.5 78.65 L31.0 78.78 L31.5 78.89 L32.0 78.98 L32.5 79.05 L33.0 79.11 L33.5 79.15 L34.0 79.19 L34.5 79.21 L35.0 79.23 L35.5 79.25 L36.0 79.26 L36.5 79.27 L37.0 79.28 L37.5 79.28 L38.0 79.28 L38.5 79.29 L39.0 79.29 L39.5 79.28 L40.0 79.28 L40.5 79.28 L41.0 79.28 L41.5 79.27 L42.0 79.26 L42.5 79.25 L43.0 79.24 L43.5 79.23 L44.0 79.21 L44.5 79.20 L45.0 79.18 L45.5 79.15 L46.0 79.12 L46.5 79.09 L47.0 79.06 L47.5 79.02 L48.0 78.98 L48.5 78.93 L49.0 78.88 L49.5 78.82 L50.0 78.77 L50.5 78.70 L51.0 78.64 L51.5 78.58 L52.0 78.51 L52.5 78.45 L53.0 78.38 L53.5 78.32 L54.0 78.26 L54.5 78.20 L55.0 78.15 L55.5 78.11 L56.0 78.07 L56.5 78.04 L57.0 78.02 L57.5 78.00 L58.0 78.00 L58.5 78.00 L59.0 78.02 L59.5 78.04 L60.0 78.07 L60.5 78.11 L61.0 78.15 L61.5 78.20 L62.0 78.26 L62.5 78.32 L63.0 78.38 L63.5 78.45 L64.0 78.51 L64.5 78.58 L65.0 78.64 L65.5 78.70 L66.0 78.77 L66.5 78.82 L67.0 78.88 L67.5 78.93 L68.0 78.98 L68.5 79.02 L69.0 79.06 L69.5 79.09 L70.0 79.12 L70.5 79.15 L71.0 79.18 L71.5 79.20 L72.0 79.21 L72.5 79.23 L73.0 79.24 L73.5 79.25 L74.0 79.26 L74.5 79.27 L75.0 79.28 L75.5 79.28 L76.0 79.29 L76.5 79.29 L77.0 79.29 L77.5 79.29 L78.0 79.29 L78.5 79.30 L79.0 79.30 L79.5 79.30 L80.0 79.30 L80.5 79.30 L81.0 79.30 L81.5 79.30 L82.0 79.30 L82.5 79.30 L83.0 79.30 L83.5 79.30 L84.0 79.30 L84.5 79.30 L85.0 79.30 L85.5 79.30 L86.0 79.30 L86.5 79.30 L87.0 79.30 L87.5 79.30 L88.0 79.30 L88.5 79.30 L89.0 79.30 L89.5 79.30 L90.0 79.30 L90.5 79.30 L91.0 79.30 L91.5 79.30 L92.0 79.30 L92.5 79.30 L93.0 79.30 L93.5 79.30 L94.0 79.30 L94.5 79.30 L95.0 79.30 L95.5 79.30 L96.0 79.30 L96.5 79.30 L97.0 79.30 L97.5 79.30 L98.0 79.30 L98.5 79.30 L99.0 79.30 L99.5 79.30 L100.0 79.30 L100.5 79.30 L101.0 79.30 L101.5 79.30 L102.0 79.30 L102.5 79.30 L103.0 79.30 L103.5 79.30 L104.0 79.30 L104.5 79.30 L105.0 79.30 L105.5 79.30 L106.0 79.30 L106.5 79.30 L107.0 79.30 L107.5 79.30 L108.0 79.30 L108.5 79.30 L109.0 79.30 L109.5 79.30 L110.0 79.30 L110.5 79.30 L111.0 79.30 L111.5 79.30 L112.0 79.30 L112.5 79.30 L113.0 79.30 L113.5 79.30 L114.0 79.30 L114.5 79.30 L115.0 79.30 L115.5 79.30 L116.0 79.30 L116.5 79.30 L117.0 79.30 L117.5 79.30 L118.0 79.30 L118.5 79.30 L119.0 79.30 L119.5 79.30 L120.0 79.30 L120.5 79.30 L121.0 79.30 L121.5 79.30 L122.0 79.30 L122.5 79.30 L123.0 79.30 L123.5 79.30 L124.0 79.30 L124.5 79.30 L125.0 79.30 L125.5 79.30 L126.0 79.30 L126.5 79.30 L127.0 79.30 L127.5 79.30 L128.0 79.30 L128.5 79.30 L129.0 79.30 L129.5 79.30 L130.0 79.30 L130.5 79.30 L131.0 79.30 L131.5 79.30 L132.0 79.30 L132.5 79.30 L133.0 79.30 L133.5 79.30 L134.0 79.30 L134.5 79.30 L135.0 79.30 L135.5 79.30 L136.0 79.30 L136.5 79.30 L137.0 79.30 L137.5 79.30 L138.0 79.30 L138.5 79.30 L139.0 79.30 L139.5 79.30 L140.0 79.30 L140.5 79.30 L141.0 79.30 L141.5 79.30 L142.0 79.30 L142.5 79.30 L143.0 79.30 L143.5 79.30 L144.0 79.30 L144.5 79.30 L145.0 79.30 L145.5 79.30 L146.0 79.30" fill="none" stroke="#3563ea" stroke-width="1.7" stroke-linejoin="round"/></svg>
<div class="abs ct" style="left:603px;top:489px">Request Size</div>
<div class="cbx" style="left:603px;top:518px"></div><svg style="left:603px;top:518px" width="156" height="100"><path d="M10.6 20 L11.6 79.3 L112 79.3 L112.8 76.5 L113.6 79.3 L145.4 79.3 L145.4 39.6" fill="none" stroke="#3563ea" stroke-width="1.5" stroke-linejoin="round"/></svg>
<div class="abs ct" style="left:795px;top:489px">Response Size</div>
<div class="cbx" style="left:795px;top:518px"></div><svg style="left:795px;top:518px" width="156" height="100"><path d="M10.0 79.30 L10.5 79.30 L11.0 79.30 L11.5 79.30 L12.0 79.30 L12.5 79.30 L13.0 79.30 L13.5 79.30 L14.0 79.30 L14.5 79.30 L15.0 79.30 L15.5 79.30 L16.0 79.30 L16.5 79.30 L17.0 79.30 L17.5 79.30 L18.0 79.30 L18.5 79.30 L19.0 79.30 L19.5 79.30 L20.0 79.30 L20.5 79.30 L21.0 79.30 L21.5 79.30 L22.0 79.30 L22.5 79.30 L23.0 79.30 L23.5 79.30 L24.0 79.30 L24.5 79.30 L25.0 79.30 L25.5 79.30 L26.0 79.30 L26.5 79.30 L27.0 79.30 L27.5 79.30 L28.0 79.30 L28.5 79.30 L29.0 79.30 L29.5 79.30 L30.0 79.30 L30.5 79.30 L31.0 79.30 L31.5 79.30 L32.0 79.30 L32.5 79.30 L33.0 79.30 L33.5 79.30 L34.0 79.30 L34.5 79.30 L35.0 79.30 L35.5 79.30 L36.0 79.30 L36.5 79.30 L37.0 79.30 L37.5 79.30 L38.0 79.30 L38.5 79.30 L39.0 79.30 L39.5 79.30 L40.0 79.30 L40.5 79.30 L41.0 79.30 L41.5 79.30 L42.0 79.30 L42.5 79.30 L43.0 79.30 L43.5 79.30 L44.0 79.30 L44.5 79.30 L45.0 79.30 L45.5 79.30 L46.0 79.30 L46.5 79.30 L47.0 79.30 L47.5 79.30 L48.0 79.30 L48.5 79.30 L49.0 79.30 L49.5 79.30 L50.0 79.30 L50.5 79.30 L51.0 79.30 L51.5 79.30 L52.0 79.30 L52.5 79.30 L53.0 79.30 L53.5 79.30 L54.0 79.30 L54.5 79.30 L55.0 79.30 L55.5 79.30 L56.0 79.30 L56.5 79.30 L57.0 79.30 L57.5 79.30 L58.0 79.30 L58.5 79.29 L59.0 79.29 L59.5 79.29 L60.0 79.28 L60.5 79.27 L61.0 79.25 L61.5 79.23 L62.0 79.19 L62.5 79.14 L63.0 79.08 L63.5 78.98 L64.0 78.86 L64.5 78.68 L65.0 78.45 L65.5 78.15 L66.0 77.76 L66.5 77.26 L67.0 76.63 L67.5 75.84 L68.0 74.87 L68.5 73.68 L69.0 72.26 L69.5 70.58 L70.0 68.63 L70.5 66.38 L71.0 63.83 L71.5 60.99 L72.0 57.87 L72.5 54.50 L73.0 50.92 L73.5 47.20 L74.0 43.39 L74.5 39.59 L75.0 35.87 L75.5 32.35 L76.0 29.11 L76.5 26.24 L77.0 23.85 L77.5 22.00 L78.0 20.75 L78.5 20.15 L79.0 20.22 L79.5 20.95 L80.0 22.32 L80.5 24.29 L81.0 26.78 L81.5 29.73 L82.0 33.03 L82.5 36.61 L83.0 40.35 L83.5 44.16 L84.0 47.95 L84.5 51.65 L85.0 55.19 L85.5 58.51 L86.0 61.58 L86.5 64.36 L87.0 66.85 L87.5 69.04 L88.0 70.94 L88.5 72.57 L89.0 73.94 L89.5 75.08 L90.0 76.01 L90.5 76.77 L91.0 77.37 L91.5 77.85 L92.0 78.22 L92.5 78.51 L93.0 78.72 L93.5 78.88 L94.0 79.00 L94.5 79.09 L95.0 79.16 L95.5 79.20 L96.0 79.23 L96.5 79.25 L97.0 79.27 L97.5 79.28 L98.0 79.29 L98.5 79.29 L99.0 79.29 L99.5 79.30 L100.0 79.30 L100.5 79.30 L101.0 79.30 L101.5 79.30 L102.0 79.30 L102.5 79.30 L103.0 79.30 L103.5 79.30 L104.0 79.30 L104.5 79.30 L105.0 79.30 L105.5 79.30 L106.0 79.30 L106.5 79.30 L107.0 79.30 L107.5 79.30 L108.0 79.30 L108.5 79.30 L109.0 79.30 L109.5 79.30 L110.0 79.30 L110.5 79.30 L111.0 79.30 L111.5 79.30 L112.0 79.30 L112.5 79.30 L113.0 79.30 L113.5 79.30 L114.0 79.30 L114.5 79.30 L115.0 79.30 L115.5 79.30 L116.0 79.30 L116.5 79.30 L117.0 79.30 L117.5 79.30 L118.0 79.30 L118.5 79.30 L119.0 79.30 L119.5 79.30 L120.0 79.30 L120.5 79.30 L121.0 79.30 L121.5 79.30 L122.0 79.30 L122.5 79.30 L123.0 79.30 L123.5 79.30 L124.0 79.30 L124.5 79.30 L125.0 79.30 L125.5 79.30 L126.0 79.30 L126.5 79.30 L127.0 79.30 L127.5 79.30 L128.0 79.30 L128.5 79.30 L129.0 79.30 L129.5 79.30 L130.0 79.30 L130.5 79.30 L131.0 79.30 L131.5 79.30 L132.0 79.30 L132.5 79.30 L133.0 79.30 L133.5 79.30 L134.0 79.30 L134.5 79.30 L135.0 79.30 L135.5 79.30 L136.0 79.30 L136.5 79.30 L137.0 79.30 L137.5 79.30 L138.0 79.30 L138.5 79.30 L139.0 79.30 L139.5 79.30 L140.0 79.30 L140.5 79.30 L141.0 79.30 L141.5 79.30 L142.0 79.30 L142.5 79.30 L143.0 79.30 L143.5 79.30 L144.0 79.30 L144.5 79.30 L145.0 79.30 L145.5 79.30 L146.0 79.30 L146.0 79.3 L10.0 79.3 Z" fill="#e1e7fb"/><path d="M10.0 79.30 L10.5 79.30 L11.0 79.30 L11.5 79.30 L12.0 79.30 L12.5 79.30 L13.0 79.30 L13.5 79.30 L14.0 79.30 L14.5 79.30 L15.0 79.30 L15.5 79.30 L16.0 79.30 L16.5 79.30 L17.0 79.30 L17.5 79.30 L18.0 79.30 L18.5 79.30 L19.0 79.30 L19.5 79.30 L20.0 79.30 L20.5 79.30 L21.0 79.30 L21.5 79.30 L22.0 79.30 L22.5 79.30 L23.0 79.30 L23.5 79.30 L24.0 79.30 L24.5 79.30 L25.0 79.30 L25.5 79.30 L26.0 79.30 L26.5 79.30 L27.0 79.30 L27.5 79.30 L28.0 79.30 L28.5 79.30 L29.0 79.30 L29.5 79.30 L30.0 79.30 L30.5 79.30 L31.0 79.30 L31.5 79.30 L32.0 79.30 L32.5 79.30 L33.0 79.30 L33.5 79.30 L34.0 79.30 L34.5 79.30 L35.0 79.30 L35.5 79.30 L36.0 79.30 L36.5 79.30 L37.0 79.30 L37.5 79.30 L38.0 79.30 L38.5 79.30 L39.0 79.30 L39.5 79.30 L40.0 79.30 L40.5 79.30 L41.0 79.30 L41.5 79.30 L42.0 79.30 L42.5 79.30 L43.0 79.30 L43.5 79.30 L44.0 79.30 L44.5 79.30 L45.0 79.30 L45.5 79.30 L46.0 79.30 L46.5 79.30 L47.0 79.30 L47.5 79.30 L48.0 79.30 L48.5 79.30 L49.0 79.30 L49.5 79.30 L50.0 79.30 L50.5 79.30 L51.0 79.30 L51.5 79.30 L52.0 79.30 L52.5 79.30 L53.0 79.30 L53.5 79.30 L54.0 79.30 L54.5 79.30 L55.0 79.30 L55.5 79.30 L56.0 79.30 L56.5 79.30 L57.0 79.30 L57.5 79.30 L58.0 79.30 L58.5 79.29 L59.0 79.29 L59.5 79.29 L60.0 79.28 L60.5 79.27 L61.0 79.25 L61.5 79.23 L62.0 79.19 L62.5 79.14 L63.0 79.08 L63.5 78.98 L64.0 78.86 L64.5 78.68 L65.0 78.45 L65.5 78.15 L66.0 77.76 L66.5 77.26 L67.0 76.63 L67.5 75.84 L68.0 74.87 L68.5 73.68 L69.0 72.26 L69.5 70.58 L70.0 68.63 L70.5 66.38 L71.0 63.83 L71.5 60.99 L72.0 57.87 L72.5 54.50 L73.0 50.92 L73.5 47.20 L74.0 43.39 L74.5 39.59 L75.0 35.87 L75.5 32.35 L76.0 29.11 L76.5 26.24 L77.0 23.85 L77.5 22.00 L78.0 20.75 L78.5 20.15 L79.0 20.22 L79.5 20.95 L80.0 22.32 L80.5 24.29 L81.0 26.78 L81.5 29.73 L82.0 33.03 L82.5 36.61 L83.0 40.35 L83.5 44.16 L84.0 47.95 L84.5 51.65 L85.0 55.19 L85.5 58.51 L86.0 61.58 L86.5 64.36 L87.0 66.85 L87.5 69.04 L88.0 70.94 L88.5 72.57 L89.0 73.94 L89.5 75.08 L90.0 76.01 L90.5 76.77 L91.0 77.37 L91.5 77.85 L92.0 78.22 L92.5 78.51 L93.0 78.72 L93.5 78.88 L94.0 79.00 L94.5 79.09 L95.0 79.16 L95.5 79.20 L96.0 79.23 L96.5 79.25 L97.0 79.27 L97.5 79.28 L98.0 79.29 L98.5 79.29 L99.0 79.29 L99.5 79.30 L100.0 79.30 L100.5 79.30 L101.0 79.30 L101.5 79.30 L102.0 79.30 L102.5 79.30 L103.0 79.30 L103.5 79.30 L104.0 79.30 L104.5 79.30 L105.0 79.30 L105.5 79.30 L106.0 79.30 L106.5 79.30 L107.0 79.30 L107.5 79.30 L108.0 79.30 L108.5 79.30 L109.0 79.30 L109.5 79.30 L110.0 79.30 L110.5 79.30 L111.0 79.30 L111.5 79.30 L112.0 79.30 L112.5 79.30 L113.0 79.30 L113.5 79.30 L114.0 79.30 L114.5 79.30 L115.0 79.30 L115.5 79.30 L116.0 79.30 L116.5 79.30 L117.0 79.30 L117.5 79.30 L118.0 79.30 L118.5 79.30 L119.0 79.30 L119.5 79.30 L120.0 79.30 L120.5 79.30 L121.0 79.30 L121.5 79.30 L122.0 79.30 L122.5 79.30 L123.0 79.30 L123.5 79.30 L124.0 79.30 L124.5 79.30 L125.0 79.30 L125.5 79.30 L126.0 79.30 L126.5 79.30 L127.0 79.30 L127.5 79.30 L128.0 79.30 L128.5 79.30 L129.0 79.30 L129.5 79.30 L130.0 79.30 L130.5 79.30 L131.0 79.30 L131.5 79.30 L132.0 79.30 L132.5 79.30 L133.0 79.30 L133.5 79.30 L134.0 79.30 L134.5 79.30 L135.0 79.30 L135.5 79.30 L136.0 79.30 L136.5 79.30 L137.0 79.30 L137.5 79.30 L138.0 79.30 L138.5 79.30 L139.0 79.30 L139.5 79.30 L140.0 79.30 L140.5 79.30 L141.0 79.30 L141.5 79.30 L142.0 79.30 L142.5 79.30 L143.0 79.30 L143.5 79.30 L144.0 79.30 L144.5 79.30 L145.0 79.30 L145.5 79.30 L146.0 79.30" fill="none" stroke="#3563ea" stroke-width="1.7" stroke-linejoin="round"/></svg>
<div class="abs ct" style="left:987px;top:489px">Response Throughput</div>
<div class="cbx" style="left:987px;top:518px"></div><svg style="left:987px;top:518px" width="156" height="100"><path d="M10.6 20 L10.9 79.5 L144 79.5 L145.6 76" fill="none" stroke="#3563ea" stroke-width="1.5" stroke-linejoin="round"/></svg>
</body></html>
